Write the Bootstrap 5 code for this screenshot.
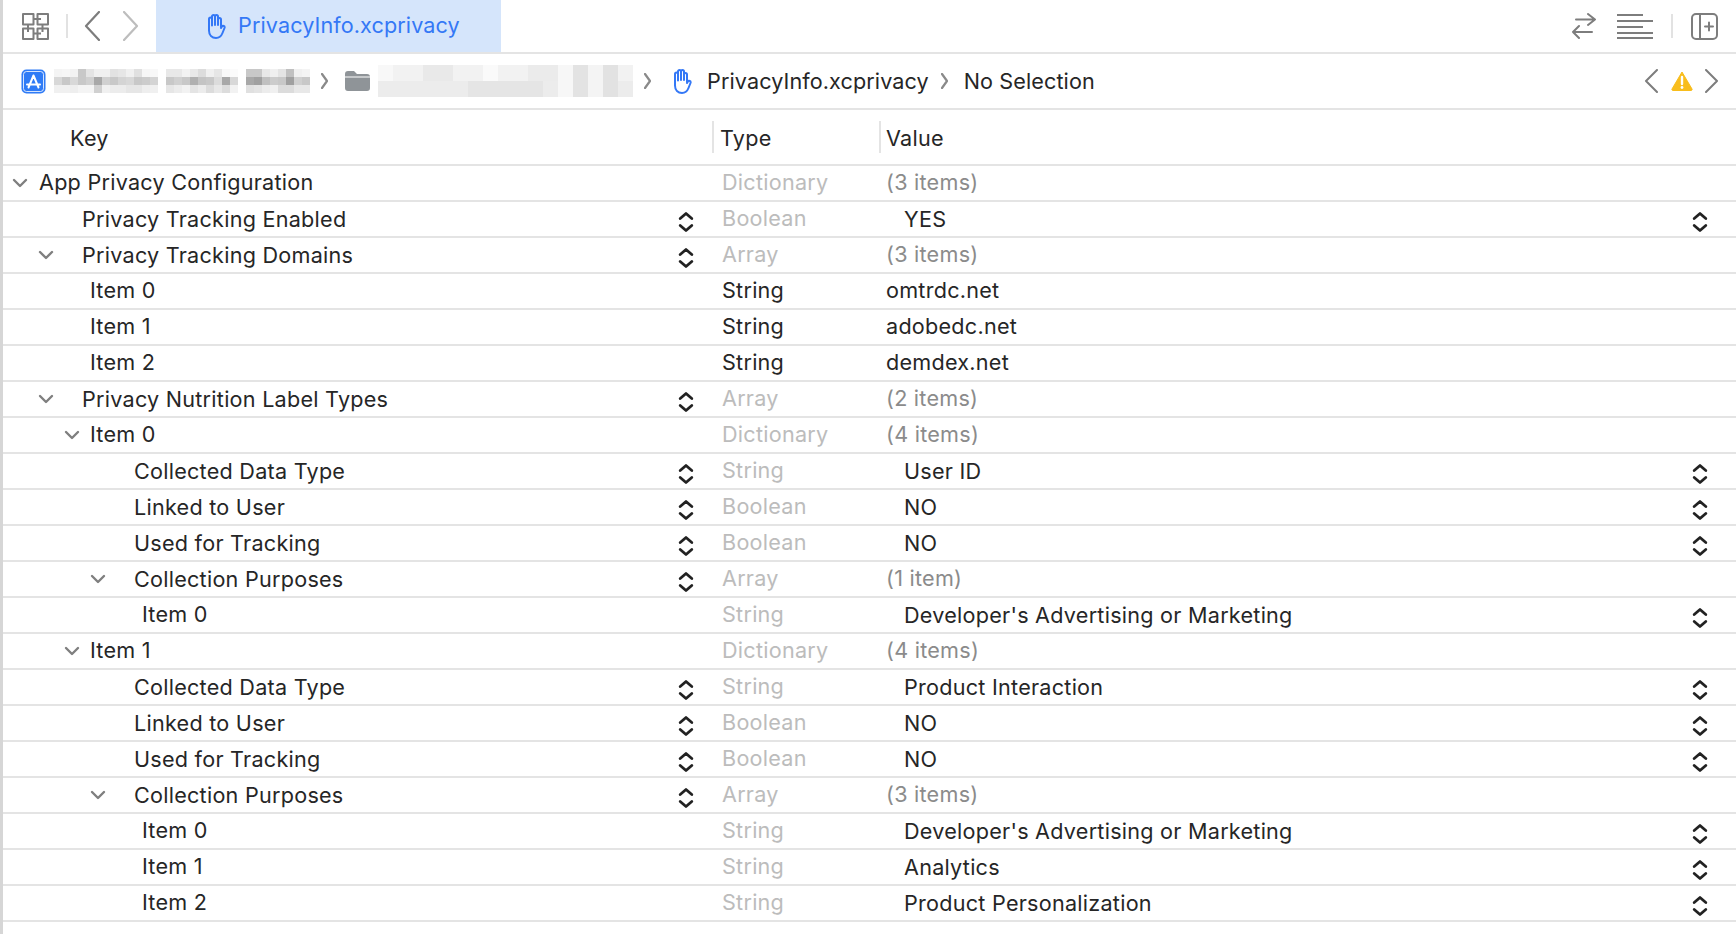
<!DOCTYPE html>
<html lang="en"><head><meta charset="utf-8"><title>PrivacyInfo.xcprivacy</title>
<link href="https://cdn.jsdelivr.net/npm/bootstrap@5.3.0/dist/css/bootstrap.min.css" rel="stylesheet">
<style>
html,body{height:100%;overflow:hidden}
body{font-family:Inter,"Liberation Sans",sans-serif;font-size:21.6px;letter-spacing:.25px;color:#262626;background:#fff;line-height:1}
.shell{border-left:3px solid #d6d6d6;height:934px}
.ic{display:block;flex:none;fill:none;stroke:#7d7d7d;stroke-width:2;stroke-linecap:round;stroke-linejoin:round}
.toolbar{height:54px;border-bottom:2px solid #e4e4e4;padding-left:19px}
.vsep{width:2px;height:24px;background:#e2e2e2;flex:none}
.tabitem{width:345px;height:52px;margin-left:17px;padding-left:50px;background:#d5e5fb;color:#3478f6;letter-spacing:.1px}
.tabitem svg{stroke:#3478f6;margin-right:12px}
.crumbs{height:56px;border-bottom:2px solid #e4e4e4;padding-left:18px;padding-right:17px;letter-spacing:.1px}
.crumbs span{padding-top:2px}
.chev{stroke:#8a8a8a;stroke-width:2.2}
.thead{height:56px;border-bottom:2px solid #e4e4e4}
.th1{width:709px;padding-left:67px;padding-top:4px}
.th2{width:167px;border-left:2px solid #e4e4e4;height:32px;padding-left:6px;padding-top:4px}
.th3{border-left:2px solid #e4e4e4;height:32px;padding-left:5px;padding-top:4px}
.trow{height:36px;border-bottom:2px solid #e4e4e4}
.ckey{width:675px;flex:none;position:relative;height:34px}
.stepcell{width:44px;flex:none}
.ctype{width:164px;flex:none}
.cval{flex:1 1 auto;min-width:0}
.muted1{color:#bcbcbc}
.muted2{color:#8b8b8b}
.nest{padding-left:18px;padding-top:2px}
.l0{padding-left:36px}.l1{padding-left:79px;padding-top:2px}.l2{padding-left:87px}.l3{padding-left:131px;padding-top:2px}.l4{padding-left:139px}
.tw{position:absolute;top:12px}
.t0{left:9px}.t1{left:35px}.t2{left:61px}.t3{left:87px}
.tw svg{stroke:#7f7f7f;stroke-width:2.4}
.step{stroke:#222;stroke-width:2.8;margin-top:6px}
.vstep{margin-right:28px}
</style></head><body>
<svg width="0" height="0" class="position-absolute">
<symbol id="hand" viewBox="0 0 20 26"><g transform="translate(20 0) scale(-1 1)"><path d="M5 14V6.500a1.500 1.500 0 0 1 3 0V12M8 12V3.500a1.500 1.500 0 0 1 3 0V12M11 12V3.500a1.500 1.500 0 0 1 3 0V12.500M14 12.500V6a1.500 1.500 0 0 1 3 0v11.500c0 4.800-3 7.500-7 7.500-3.500 0-5.200-1.700-6.500-5L1.500 15c-.7-1.900 1.800-3 2.700-1.300L5 15"/></g></symbol>
<symbol id="stp" viewBox="0 0 16 24"><path d="M2.200 8.500 8 3.500 13.800 8.500M2.200 15.500 8 20.500 13.800 15.500"/></symbol>
<symbol id="twist" viewBox="0 0 16 10"><path d="M2 2l6 6 6-6"/></symbol>
</svg>
<div class="shell">
<div class="toolbar d-flex align-items-center">
<svg class="ic" width="27" height="27" viewBox="0 0 27 27"><path d="M1 1h10.500v10.500H1zM15.500 1H26v10.500H15.500zM1 15.500h10.500V26H1zM15.500 15.500H26V26H15.500zM11.500 6H19M6 11.500V19M20.500 11.500V19M11.500 20.500H19" stroke-linecap="butt"/></svg>
<div class="vsep" style="margin-left:17px"></div>
<svg class="ic" width="16" height="30" viewBox="0 0 16 30" style="margin-left:16px"><path d="M15 1 2 15l13 14" stroke-width="2.200"/></svg>
<svg class="ic" width="16" height="30" viewBox="0 0 16 30" style="margin-left:23px;stroke:#bdbdbd"><path d="M1 1l13 14L1 29" stroke-width="2.200"/></svg>
<div class="tabitem d-flex align-items-center">
<svg class="ic" width="20" height="26"><use href="#hand"/></svg><span>PrivacyInfo.xcprivacy</span></div>
<svg class="ic ms-auto" width="26" height="26" viewBox="0 0 26 26"><path d="M5 6.500h19M17 1l7 5.500L17 12M21 19H2M8 13l-6 6 6 6"/></svg>
<svg class="ic" width="36" height="26" viewBox="0 0 36 26" style="margin-left:20px"><path d="M0 2h26M0 8h36M0 14h26M0 20h36M0 25h36" stroke-linecap="butt"/></svg>
<div class="vsep" style="margin-left:18px"></div>
<svg class="ic" width="27" height="27" viewBox="0 0 27 27" style="margin:0 18px"><rect x="1" y="1" width="25" height="25" rx="4"/><path d="M9 1v25M14 13.500h8M18 9.500v8"/></svg>
</div>
<div class="crumbs d-flex align-items-center">
<svg width="25" height="25" viewBox="0 0 25 25" class="d-block flex-shrink-0"><rect x=".5" y=".5" width="24" height="24" rx="5" fill="#2f7bf6"/><rect x="2.500" y="2.500" width="20" height="20" rx="3" fill="none" stroke="#fff" stroke-opacity=".8"/><path d="M12.500 6.500 7.500 18.500M12.500 6.500 17.500 18.500M6 15.500h13" stroke="#fff" stroke-width="2" fill="none" stroke-linecap="round"/></svg>
<svg id="blurA" width="256" height="24" viewBox="0 0 32 3" preserveAspectRatio="none" style="margin-left:8px" class="flex-shrink-0" shape-rendering="crispEdges"></svg>
<svg class="ic chev" width="7" height="16" viewBox="0 0 7 16" style="margin-left:11px"><path d="M1 1l5 7-5 7"/></svg>
<svg width="25" height="20" viewBox="0 0 25 20" class="d-block flex-shrink-0" style="margin-left:17px"><path d="M0 3a3 3 0 0 1 3-3h6l3 3h10a3 3 0 0 1 3 3v11a3 3 0 0 1-3 3H3a3 3 0 0 1-3-3z" fill="#8f9498"/><path d="M0 6h25" stroke="#fff"/></svg>
<svg width="255" height="32" viewBox="0 0 17 2" preserveAspectRatio="none" style="margin-left:8px" class="flex-shrink-0" shape-rendering="crispEdges"><rect width="17" height="1" fill="#f2f2f2"/><rect y="1" width="17" height="1" fill="#ececec"/>
<rect x="0" width="1" height="1" fill="#f8f8f8"/><rect x="3" width="2" height="1" fill="#e9e9e9"/><rect x="7" width="1" height="1" fill="#fafafa"/><rect x="10" width="2" height="1" fill="#ebebeb"/><rect x="12" width="1" height="2" fill="#f7f7f7"/><rect x="13" width="1" height="2" fill="#e3e3e3"/><rect x="14" width="1" height="2" fill="#f4f4f4"/><rect x="15" width="1" height="2" fill="#e2e2e2"/><rect x="16" width="1" height="1" fill="#f2f2f2"/><rect x="6" y="1" width="5" height="1" fill="#e5e5e5"/></svg>
<svg class="ic chev" width="7" height="16" viewBox="0 0 7 16" style="margin-left:11px"><path d="M1 1l5 7-5 7"/></svg>
<svg class="ic" width="20" height="26" style="stroke:#3478f6;margin-left:21px"><use href="#hand"/></svg>
<span style="margin-left:15px">PrivacyInfo.xcprivacy</span>
<svg class="ic chev" width="7" height="16" viewBox="0 0 7 16" style="margin-left:12px"><path d="M1 1l5 7-5 7"/></svg>
<span style="margin-left:16px">No Selection</span>
<svg class="ic ms-auto" width="14" height="24" viewBox="0 0 14 24"><path d="M13 1 2 12l11 11"/></svg>
<svg width="22" height="20" viewBox="0 0 22 20" class="d-block flex-shrink-0" style="margin-left:13px"><path d="M11 1 21 18a1 1 0 0 1-1 1.500H2A1 1 0 0 1 1 18z" fill="#f8bd1c" stroke="#f8bd1c" stroke-linejoin="round"/><path d="M11 6v7" stroke="#fff" stroke-width="2.400" stroke-linecap="round"/><circle cx="11" cy="16.500" r="1.400" fill="#fff"/></svg>
<svg class="ic" width="14" height="24" viewBox="0 0 14 24" style="margin-left:12px"><path d="M1 1l11 11L1 23"/></svg>
</div>
<div class="thead d-flex align-items-center"><div class="th1">Key</div><div class="th2 d-flex align-items-center">Type</div><div class="th3 d-flex align-items-center">Value</div></div>

<div class="trow d-flex align-items-center"><div class="ckey d-flex align-items-center l0"><span class="tw t0"><svg class="ic" width="16" height="10"><use href="#twist"/></svg></span>App Privacy Configuration</div><div class="stepcell"></div><div class="ctype muted1">Dictionary</div><div class="cval muted2">(3 items)</div></div>
<div class="trow d-flex align-items-center"><div class="ckey d-flex align-items-center l1">Privacy Tracking Enabled</div><div class="stepcell"><svg class="ic step" width="16" height="24"><use href="#stp"/></svg></div><div class="ctype muted1">Boolean</div><div class="cval nest">YES</div><svg class="ic step vstep" width="16" height="24"><use href="#stp"/></svg></div>
<div class="trow d-flex align-items-center"><div class="ckey d-flex align-items-center l1"><span class="tw t1"><svg class="ic" width="16" height="10"><use href="#twist"/></svg></span>Privacy Tracking Domains</div><div class="stepcell"><svg class="ic step" width="16" height="24"><use href="#stp"/></svg></div><div class="ctype muted1">Array</div><div class="cval muted2">(3 items)</div></div>
<div class="trow d-flex align-items-center"><div class="ckey d-flex align-items-center l2">Item 0</div><div class="stepcell"></div><div class="ctype">String</div><div class="cval">omtrdc.net</div></div>
<div class="trow d-flex align-items-center"><div class="ckey d-flex align-items-center l2">Item 1</div><div class="stepcell"></div><div class="ctype">String</div><div class="cval">adobedc.net</div></div>
<div class="trow d-flex align-items-center"><div class="ckey d-flex align-items-center l2">Item 2</div><div class="stepcell"></div><div class="ctype">String</div><div class="cval">demdex.net</div></div>
<div class="trow d-flex align-items-center"><div class="ckey d-flex align-items-center l1"><span class="tw t1"><svg class="ic" width="16" height="10"><use href="#twist"/></svg></span>Privacy Nutrition Label Types</div><div class="stepcell"><svg class="ic step" width="16" height="24"><use href="#stp"/></svg></div><div class="ctype muted1">Array</div><div class="cval muted2">(2 items)</div></div>
<div class="trow d-flex align-items-center"><div class="ckey d-flex align-items-center l2"><span class="tw t2"><svg class="ic" width="16" height="10"><use href="#twist"/></svg></span>Item 0</div><div class="stepcell"></div><div class="ctype muted1">Dictionary</div><div class="cval muted2">(4 items)</div></div>
<div class="trow d-flex align-items-center"><div class="ckey d-flex align-items-center l3">Collected Data Type</div><div class="stepcell"><svg class="ic step" width="16" height="24"><use href="#stp"/></svg></div><div class="ctype muted1">String</div><div class="cval nest">User ID</div><svg class="ic step vstep" width="16" height="24"><use href="#stp"/></svg></div>
<div class="trow d-flex align-items-center"><div class="ckey d-flex align-items-center l3">Linked to User</div><div class="stepcell"><svg class="ic step" width="16" height="24"><use href="#stp"/></svg></div><div class="ctype muted1">Boolean</div><div class="cval nest">NO</div><svg class="ic step vstep" width="16" height="24"><use href="#stp"/></svg></div>
<div class="trow d-flex align-items-center"><div class="ckey d-flex align-items-center l3">Used for Tracking</div><div class="stepcell"><svg class="ic step" width="16" height="24"><use href="#stp"/></svg></div><div class="ctype muted1">Boolean</div><div class="cval nest">NO</div><svg class="ic step vstep" width="16" height="24"><use href="#stp"/></svg></div>
<div class="trow d-flex align-items-center"><div class="ckey d-flex align-items-center l3"><span class="tw t3"><svg class="ic" width="16" height="10"><use href="#twist"/></svg></span>Collection Purposes</div><div class="stepcell"><svg class="ic step" width="16" height="24"><use href="#stp"/></svg></div><div class="ctype muted1">Array</div><div class="cval muted2">(1 item)</div></div>
<div class="trow d-flex align-items-center"><div class="ckey d-flex align-items-center l4">Item 0</div><div class="stepcell"></div><div class="ctype muted1">String</div><div class="cval nest">Developer's Advertising or Marketing</div><svg class="ic step vstep" width="16" height="24"><use href="#stp"/></svg></div>
<div class="trow d-flex align-items-center"><div class="ckey d-flex align-items-center l2"><span class="tw t2"><svg class="ic" width="16" height="10"><use href="#twist"/></svg></span>Item 1</div><div class="stepcell"></div><div class="ctype muted1">Dictionary</div><div class="cval muted2">(4 items)</div></div>
<div class="trow d-flex align-items-center"><div class="ckey d-flex align-items-center l3">Collected Data Type</div><div class="stepcell"><svg class="ic step" width="16" height="24"><use href="#stp"/></svg></div><div class="ctype muted1">String</div><div class="cval nest">Product Interaction</div><svg class="ic step vstep" width="16" height="24"><use href="#stp"/></svg></div>
<div class="trow d-flex align-items-center"><div class="ckey d-flex align-items-center l3">Linked to User</div><div class="stepcell"><svg class="ic step" width="16" height="24"><use href="#stp"/></svg></div><div class="ctype muted1">Boolean</div><div class="cval nest">NO</div><svg class="ic step vstep" width="16" height="24"><use href="#stp"/></svg></div>
<div class="trow d-flex align-items-center"><div class="ckey d-flex align-items-center l3">Used for Tracking</div><div class="stepcell"><svg class="ic step" width="16" height="24"><use href="#stp"/></svg></div><div class="ctype muted1">Boolean</div><div class="cval nest">NO</div><svg class="ic step vstep" width="16" height="24"><use href="#stp"/></svg></div>
<div class="trow d-flex align-items-center"><div class="ckey d-flex align-items-center l3"><span class="tw t3"><svg class="ic" width="16" height="10"><use href="#twist"/></svg></span>Collection Purposes</div><div class="stepcell"><svg class="ic step" width="16" height="24"><use href="#stp"/></svg></div><div class="ctype muted1">Array</div><div class="cval muted2">(3 items)</div></div>
<div class="trow d-flex align-items-center"><div class="ckey d-flex align-items-center l4">Item 0</div><div class="stepcell"></div><div class="ctype muted1">String</div><div class="cval nest">Developer's Advertising or Marketing</div><svg class="ic step vstep" width="16" height="24"><use href="#stp"/></svg></div>
<div class="trow d-flex align-items-center"><div class="ckey d-flex align-items-center l4">Item 1</div><div class="stepcell"></div><div class="ctype muted1">String</div><div class="cval nest">Analytics</div><svg class="ic step vstep" width="16" height="24"><use href="#stp"/></svg></div>
<div class="trow d-flex align-items-center"><div class="ckey d-flex align-items-center l4">Item 2</div><div class="stepcell"></div><div class="ctype muted1">String</div><div class="cval nest">Product Personalization</div><svg class="ic step vstep" width="16" height="24"><use href="#stp"/></svg></div>
</div>
<script>
var rows=["f4 f6 f2 c8 e4 f0 f0 e2 e6 f0 e0 f6 f8 ff e8 e8 f2 e8 dc f0 e6 f8 fb ff c8 c8 e8 f0 e4 c0 f0 f4",
"d8 c8 d8 c8 d0 a8 d0 c8 d4 d8 c8 cc d4 ff c8 d0 c8 b0 c4 c8 dc a8 d8 ff a8 a0 c0 cc c8 a0 d0 c8",
"f0 f0 ee f4 f4 d0 f0 ec ec e6 e6 ee f0 ff e6 ec f2 e4 ec dc e8 dc f2 ff e0 e4 ec f0 dc dc e8 e8"];
var s=document.getElementById("blurA"),n="http://www.w3.org/2000/svg";
rows.forEach(function(r,y){r.split(" ").forEach(function(c,x){var e=document.createElementNS(n,"rect");e.setAttribute("x",x);e.setAttribute("y",y);e.setAttribute("width",1);e.setAttribute("height",1);e.setAttribute("fill","#"+c+c+c);s.appendChild(e);});});
</script>
</body></html>
